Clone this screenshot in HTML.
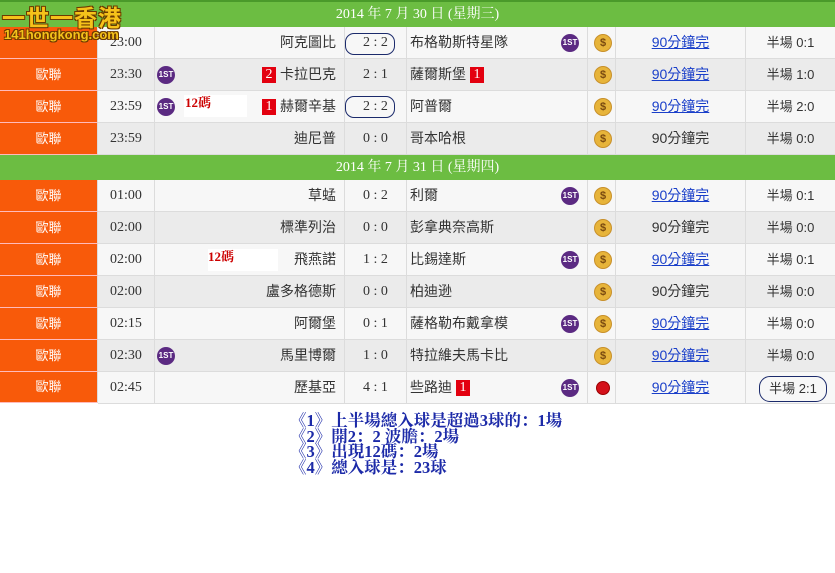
<!DOCTYPE html>
<html><head><meta charset="utf-8"><style>
body{margin:0;width:835px;height:573px;background:#fff;position:relative;overflow:hidden;font-family:"Liberation Serif","Noto Serif CJK SC","Noto Sans CJK TC",serif;}
.bar{position:absolute;left:0;width:835px;height:25px;background:#6cbd42;color:#fff;font-size:14px;line-height:25px;text-align:center;}
.row{position:absolute;left:0;width:835px;height:32px;font-size:14px;color:#333;}
.row div{position:absolute;top:0;height:31px;line-height:31px;border-bottom:1px solid #dcdcdc;border-right:1px solid #dcdcdc;box-sizing:content-box;}
.r0 div{background:#f7f7f7}.r1 div{background:#ebebeb}
.row .lg{left:0;width:97px;background:#f85a0a;color:#fff;text-align:center;border-bottom:1px solid #fbb;font-family:"Liberation Sans","Noto Sans CJK TC",sans-serif;font-size:13px}
.tm{left:98px;width:56px;text-align:center}
.hm{left:155px;width:181px;text-align:right;padding-right:8px;font-family:"Liberation Sans","Noto Sans CJK TC",sans-serif}
.sc{left:345px;width:61px;text-align:center}
.aw{left:407px;width:180px;padding-left:3px;width:177px;font-family:"Liberation Sans","Noto Sans CJK TC",sans-serif}
.ic{left:588px;width:27px}
.lk{left:616px;width:129px;text-align:center;font-family:"Liberation Sans","Noto Sans CJK TC",sans-serif}
.hf{left:746px;width:89px;text-align:center;font-family:"Liberation Sans","Noto Sans CJK TC",sans-serif;font-size:13px;border-right:none!important}
a{color:#1a3fc9;text-decoration:underline}
.red{display:inline-block;background:#e3000f;color:#fff;width:14px;height:16px;line-height:16px;text-align:center;font-size:14px;font-family:"Liberation Serif",serif;vertical-align:middle;margin:0 4px}
.st{position:absolute;width:18px;height:18px;border-radius:50%;background:#5b2a82;color:#fff;font-size:8px;line-height:18px;text-align:center;font-weight:bold;font-family:"Liberation Sans",sans-serif;top:7px}
.coin{position:absolute;left:6px;top:7px;width:16px;height:16px;border-radius:50%;background:#e7b43a;border:1px solid #c8902a;color:#7a4a10;font-size:11px;line-height:16px;text-align:center;font-weight:bold;font-family:"Liberation Sans",sans-serif}
.ring{position:absolute;border:1.5px solid #1b2a6b;border-radius:9px;height:22px;top:4px;box-sizing:border-box}
.m12{position:absolute;top:3px;height:22px;width:62px;background:#fff!important;color:#c00;font-weight:bold;font-size:13px;line-height:16px;border:none!important}
.notes{position:absolute;left:290px;top:413px;color:#1c2aa8;font-weight:bold;font-size:16.5px;line-height:15.5px;font-family:"Liberation Serif","Noto Serif CJK SC",serif}
</style></head><body>
<div style="position:absolute;left:0;top:0;width:835px;height:3px;background:#4a9a2a"></div>
<div class="bar" style="top:2px">2014 年 7 月 30 日 (星期三)</div>
<div style="position:absolute;left:2px;top:3px;font-size:23px;font-weight:bold;color:#f5c21a;font-family:'Noto Sans CJK TC',sans-serif;letter-spacing:1px;text-shadow:1px 1px 0 #6b3a00,-1px -1px 0 #6b3a00,1px -1px 0 #6b3a00,-1px 1px 0 #6b3a00;z-index:5;line-height:26px">一世一香港</div>

<div class="row r0" style="top:27px"><div class="lg"></div><div class="tm">23:00</div><div class="hm">阿克圖比</div><div class="sc">2 : 2</div><div class="aw">布格勒斯特星隊</div><div class="ic"><span class="coin">$</span></div><div class="lk"><a>90分鐘完</a></div><div class="hf">半場 0:1</div></div>
<div style="position:absolute;left:4px;top:27px;font-size:13px;font-weight:bold;color:#f5c21a;font-family:'Liberation Sans',sans-serif;text-shadow:1px 1px 0 #6b3a00,-1px -1px 0 #6b3a00,1px -1px 0 #6b3a00,-1px 1px 0 #6b3a00;z-index:5">141hongkong.com</div>
<span class="st" style="left:561px;top:34px;z-index:3">1ST</span>
<span class="ring" style="left:345px;top:33px;width:50px"></span>

<div class="row r1" style="top:59px"><div class="lg">歐聯</div><div class="tm">23:30</div><div class="hm"><span class="red">2</span>卡拉巴克</div><div class="sc">2 : 1</div><div class="aw">薩爾斯堡<span class="red">1</span></div><div class="ic"><span class="coin">$</span></div><div class="lk"><a>90分鐘完</a></div><div class="hf">半場 1:0</div></div>
<span class="st" style="left:157px;top:66px">1ST</span>

<div class="row r0" style="top:91px"><div class="lg">歐聯</div><div class="tm">23:59</div><div class="hm"><span class="red">1</span>赫爾辛基</div><div class="sc">2 : 2</div><div class="aw">阿普爾</div><div class="ic"><span class="coin">$</span></div><div class="lk"><a>90分鐘完</a></div><div class="hf">半場 2:0</div></div>
<span class="st" style="left:157px;top:98px">1ST</span>
<span class="m12" style="left:184px;top:95px;padding-left:1px">12碼</span>
<span class="ring" style="left:345px;top:96px;width:50px"></span>

<div class="row r1" style="top:123px"><div class="lg">歐聯</div><div class="tm">23:59</div><div class="hm">迪尼普</div><div class="sc">0 : 0</div><div class="aw">哥本哈根</div><div class="ic"><span class="coin">$</span></div><div class="lk">90分鐘完</div><div class="hf">半場 0:0</div></div>

<div class="bar" style="top:155px">2014 年 7 月 31 日 (星期四)</div>

<div class="row r0" style="top:180px"><div class="lg">歐聯</div><div class="tm">01:00</div><div class="hm">草蜢</div><div class="sc">0 : 2</div><div class="aw">利爾</div><div class="ic"><span class="coin">$</span></div><div class="lk"><a>90分鐘完</a></div><div class="hf">半場 0:1</div></div>
<span class="st" style="left:561px;top:187px">1ST</span>
<div class="row r1" style="top:212px"><div class="lg">歐聯</div><div class="tm">02:00</div><div class="hm">標準列治</div><div class="sc">0 : 0</div><div class="aw">彭拿典奈高斯</div><div class="ic"><span class="coin">$</span></div><div class="lk">90分鐘完</div><div class="hf">半場 0:0</div></div>
<div class="row r0" style="top:244px"><div class="lg">歐聯</div><div class="tm">02:00</div><div class="hm">飛燕諾</div><div class="sc">1 : 2</div><div class="aw">比錫達斯</div><div class="ic"><span class="coin">$</span></div><div class="lk"><a>90分鐘完</a></div><div class="hf">半場 0:1</div></div>
<span class="m12" style="left:208px;top:249px;width:70px">12碼</span>
<span class="st" style="left:561px;top:251px">1ST</span>
<div class="row r1" style="top:276px"><div class="lg">歐聯</div><div class="tm">02:00</div><div class="hm">盧多格德斯</div><div class="sc">0 : 0</div><div class="aw">柏迪逊</div><div class="ic"><span class="coin">$</span></div><div class="lk">90分鐘完</div><div class="hf">半場 0:0</div></div>
<div class="row r0" style="top:308px"><div class="lg">歐聯</div><div class="tm">02:15</div><div class="hm">阿爾堡</div><div class="sc">0 : 1</div><div class="aw">薩格勒布戴拿模</div><div class="ic"><span class="coin">$</span></div><div class="lk"><a>90分鐘完</a></div><div class="hf">半場 0:0</div></div>
<span class="st" style="left:561px;top:315px">1ST</span>
<div class="row r1" style="top:340px"><div class="lg">歐聯</div><div class="tm">02:30</div><div class="hm">馬里博爾</div><div class="sc">1 : 0</div><div class="aw">特拉維夫馬卡比</div><div class="ic"><span class="coin">$</span></div><div class="lk"><a>90分鐘完</a></div><div class="hf">半場 0:0</div></div>
<span class="st" style="left:157px;top:347px">1ST</span>
<div class="row r0" style="top:372px;height:31px"><div class="lg" style="height:30px;line-height:30px">歐聯</div><div class="tm">02:45</div><div class="hm">歷基亞</div><div class="sc">4 : 1</div><div class="aw">些路迪<span class="red">1</span></div><div class="ic"><span class="coin" style="background:#d4111a;border-color:#900;width:12px;height:12px;top:9px;left:8px;color:transparent">.</span></div><div class="lk"><a>90分鐘完</a></div><div class="hf"></div></div>
<span class="st" style="left:561px;top:379px">1ST</span>
<span class="ring" style="left:759px;top:376px;width:68px;height:26px;border-radius:11px;background:#f7f7f7;font-size:13px;line-height:23px;text-align:center;color:#333;font-family:'Liberation Sans','Noto Sans CJK TC',sans-serif">半場 2:1</span>

<div class="notes">《1》上半場總入球是超過3球的：1場<br>《2》開2：2 波膽：2場<br>《3》出現12碼：2場<br>《4》總入球是：23球</div>
</body></html>
